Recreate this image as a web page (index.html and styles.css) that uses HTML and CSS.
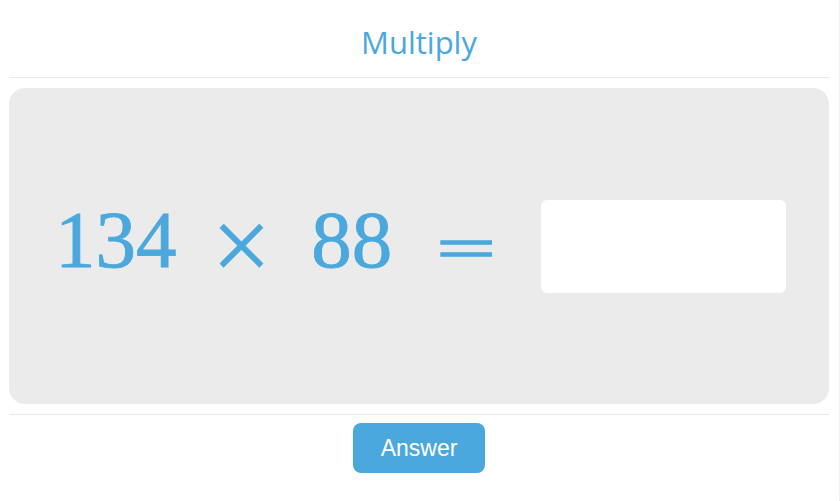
FILE: index.html
```html
<!DOCTYPE html>
<html lang="en">
<head>
    <meta charset="UTF-8">
    <meta name="viewport" content="width=device-width, initial-scale=1.0">
    <title>Multiply</title>
    <link rel="stylesheet" href="styles.css">
</head>
<body>
    <header class="header">
        <h1>Multiply</h1>
    </header>

    <section class="board">
        <span class="num">134</span>
        <span class="op times">&times;</span>
        <span class="num second">88</span>
        <span class="op equals">=</span>
        <input class="answer-box" type="text" aria-label="answer">
    </section>

    <footer class="footer">
        <button class="button">Answer</button>
    </footer>
</body>
</html>
```

FILE: styles.css
```css
/* Base */
html, body {
    height: 100%;
}

body {
    margin: 0;
    padding: 0 10px 0 9px;
    box-sizing: border-box;
    border-right: 1px dotted #e4e4e4;
    background: #fff;
    font-family: 'Open Sans', sans-serif;
    color: #4aa8dc;
}

/* Header */
.header {
    height: 77px;
    display: flex;
    align-items: center;
    justify-content: center;
    border-bottom: 1px solid #e8e8e8;
}

.header h1 {
    margin: 7px 0 0;
    font-size: 31px;
    font-weight: 400;
}

/* Question board */
.board {
    margin-top: 10px;
    padding-left: 46px;
    height: 316px;
    background: #ebebeb;
    border-radius: 16px;
    display: flex;
    align-items: center;
    gap: 35px;
    font-family: 'Liberation Serif', serif;
    line-height: 1;
}

.num {
    font-size: 81px;
    margin-bottom: 12px;
    -webkit-text-stroke: 0.9px #4aa8dc;
}

.second {
    margin-left: 5px;
}

.op {
    font-size: 106px;
    -webkit-text-stroke: 0.5px #4aa8dc;
}

.times {
    margin-bottom: 0;
}

.equals {
    margin-left: 9px;
    margin-bottom: -4px;
    transform: scaleY(0.56);
    -webkit-text-stroke: 2.4px #4aa8dc;
}

.answer-box {
    width: 245px;
    height: 93px;
    margin-left: 10px;
    box-sizing: border-box;
    border: none;
    border-radius: 6px;
    background: #fff;
    outline: none;
}

/* Footer */
.footer {
    margin-top: 10px;
    padding-top: 8px;
    border-top: 1px solid #e8e8e8;
    display: flex;
    justify-content: center;
}

.button {
    width: 132px;
    height: 50px;
    border: none;
    border-radius: 8px;
    background: #4aa8dc;
    color: #fff;
    font-family: 'Liberation Sans', sans-serif;
    font-size: 23px;
    cursor: pointer;
}
```
